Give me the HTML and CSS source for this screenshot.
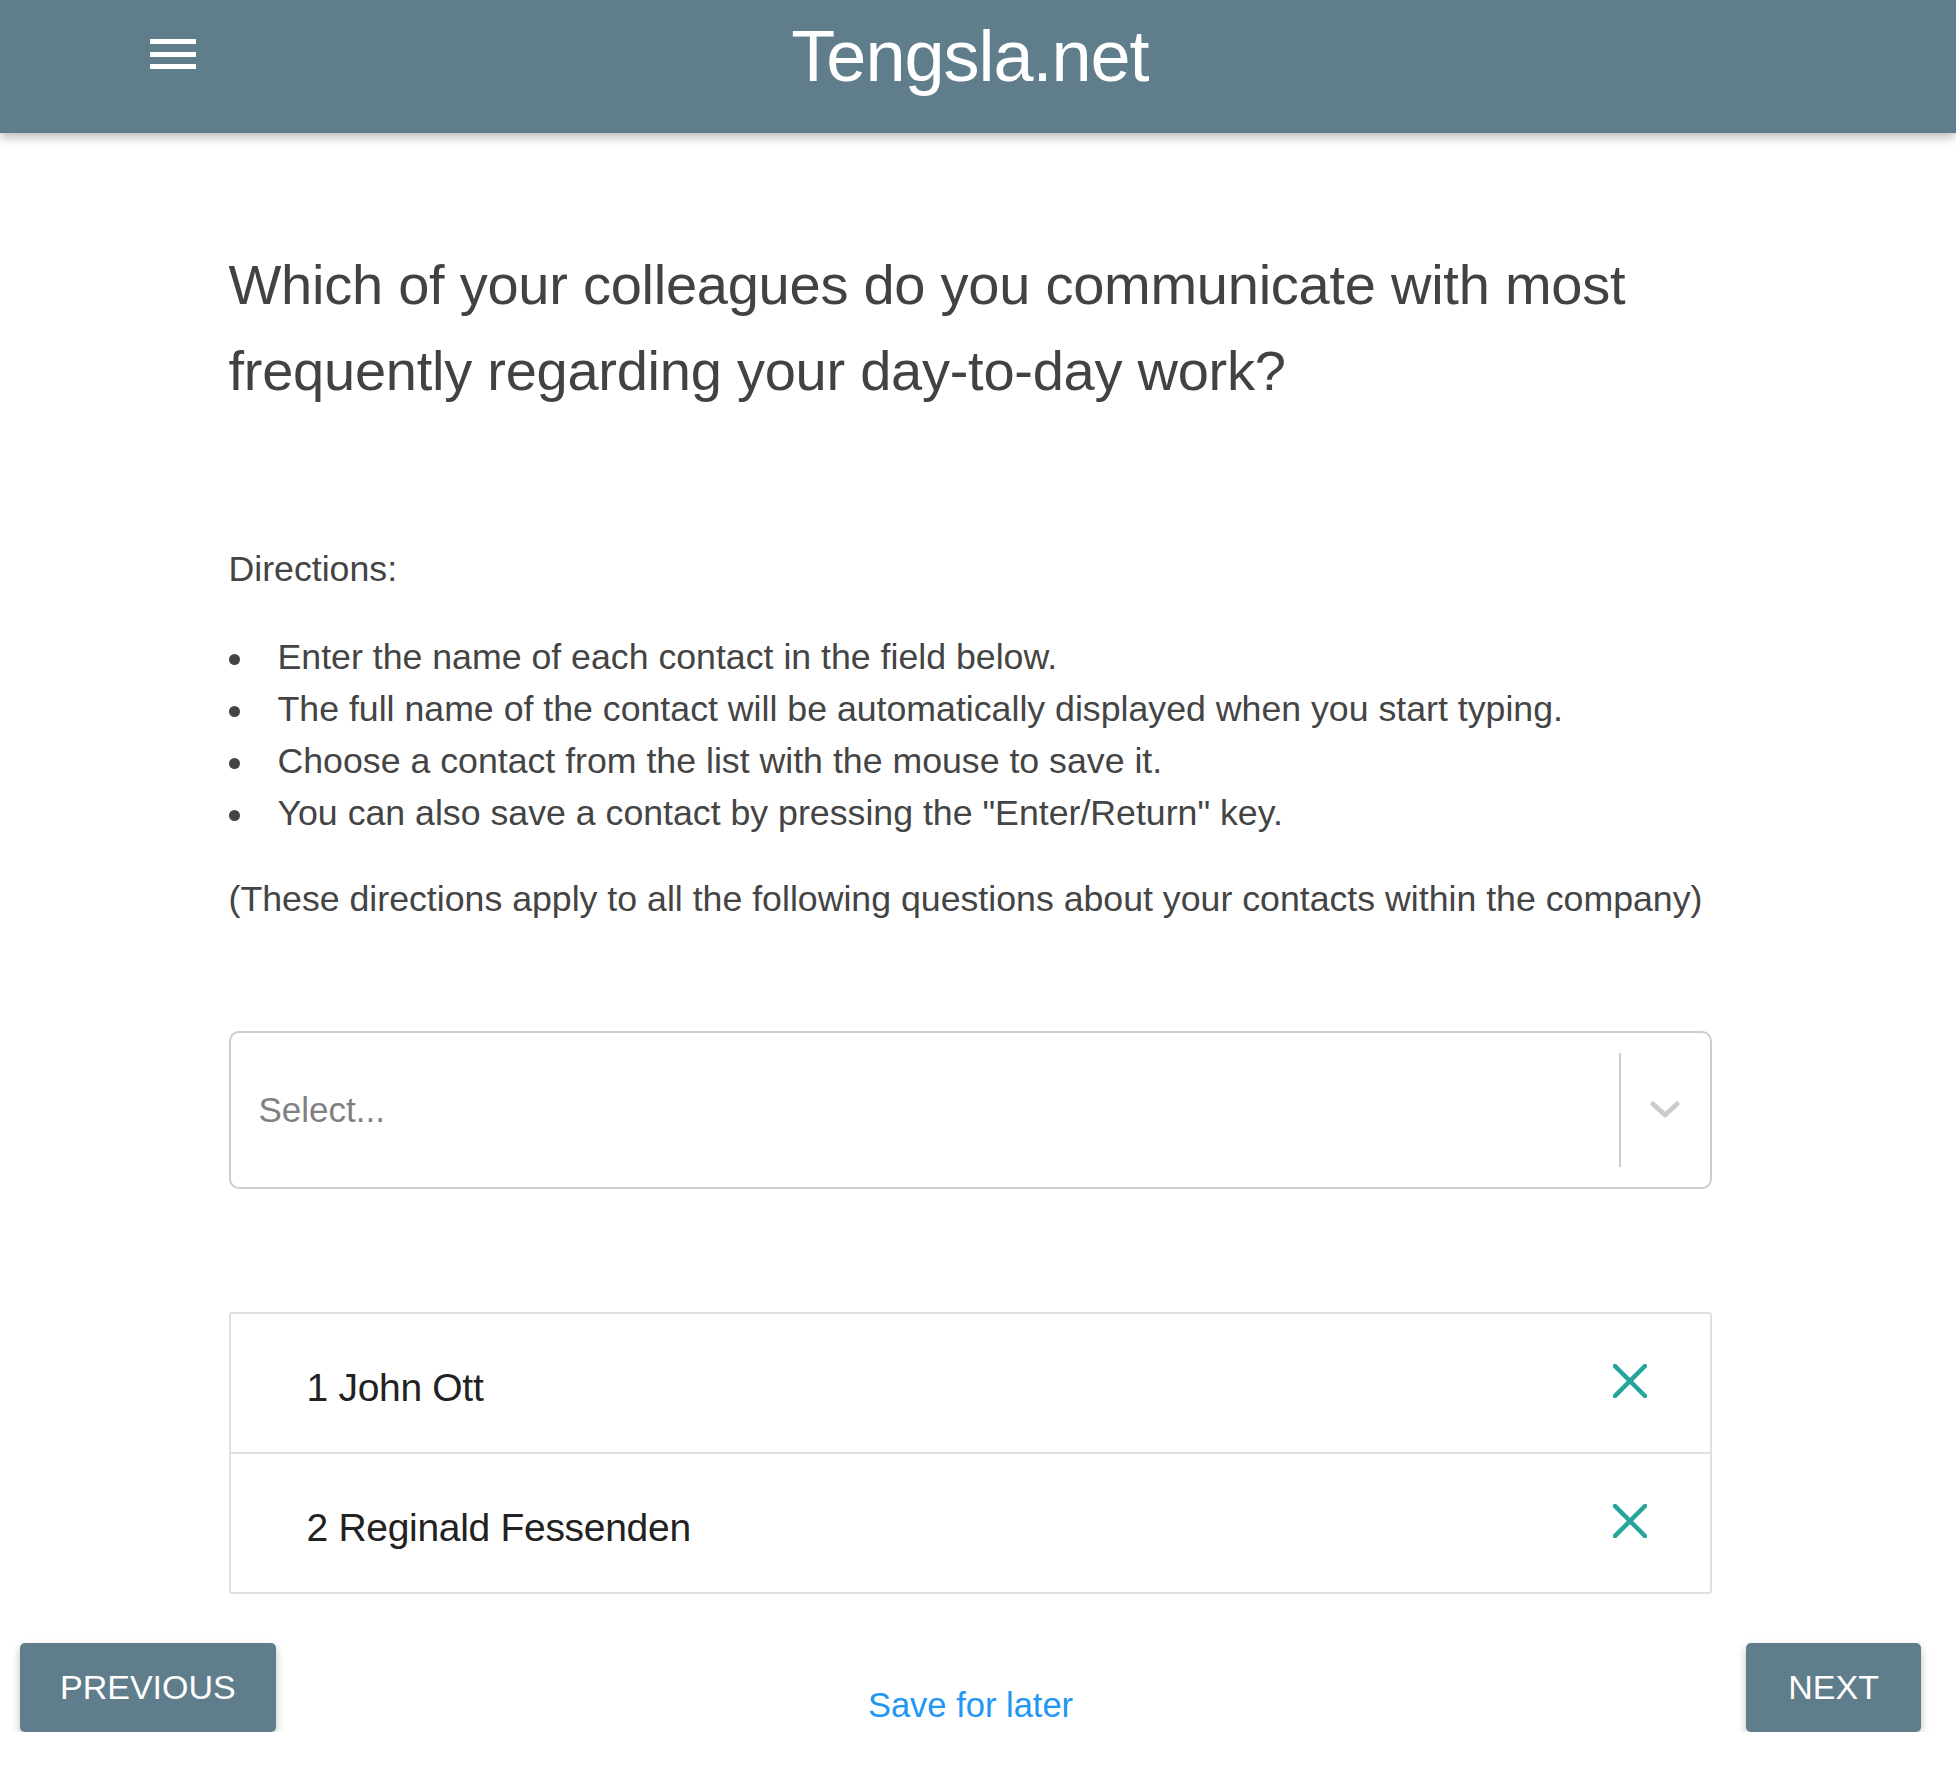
FILE: index.html
```html
<!DOCTYPE html>
<html lang="en">
<head>
<meta charset="utf-8">
<title>Tengsla.net</title>
<link rel="stylesheet" href="styles.css">
</head>
<body>
<header class="topbar">
  <div class="topbar-inner">
    <button class="menu-btn" aria-label="Menu">
      <span class="menu-line"></span>
      <span class="menu-line"></span>
      <span class="menu-line"></span>
    </button>
    <div class="brand">Tengsla.net</div>
  </div>
</header>

<div class="frame">
  <main class="content">
    <h1 class="question">Which of your colleagues do you communicate with most frequently regarding your day-to-day work?</h1>

    <section class="directions">
      <p class="dir-title">Directions:</p>
      <ul class="dir-list">
        <li>Enter the name of each contact in the field below.</li>
        <li>The full name of the contact will be automatically displayed when you start typing.</li>
        <li>Choose a contact from the list with the mouse to save it.</li>
        <li>You can also save a contact by pressing the "Enter/Return" key.</li>
      </ul>
      <p class="dir-note">(These directions apply to all the following questions about your contacts within the company)</p>
    </section>

    <div class="select">
      <div class="select-value">Select...</div>
      <div class="select-sep"></div>
      <div class="select-ind">
        <svg width="30" height="18" viewBox="0 0 30 18"><path d="M3 3 L15 14 L27 3" fill="none" stroke="#cccccc" stroke-width="5" stroke-linecap="round" stroke-linejoin="round"/></svg>
      </div>
    </div>

    <ul class="contacts">
      <li class="contact">
        <span class="contact-name">1 John Ott</span>
        <svg class="remove" width="34" height="34" viewBox="0 0 34 34"><path d="M2 2 L32 32 M32 2 L2 32" stroke="#26a69a" stroke-width="4.5" stroke-linecap="square"/></svg>
      </li>
      <li class="contact">
        <span class="contact-name">2 Reginald Fessenden</span>
        <svg class="remove" width="34" height="34" viewBox="0 0 34 34"><path d="M2 2 L32 32 M32 2 L2 32" stroke="#26a69a" stroke-width="4.5" stroke-linecap="square"/></svg>
      </li>
    </ul>
  </main>

  <footer class="footer">
    <button class="nav-btn nav-prev">PREVIOUS</button>
    <a class="save-link" href="#">Save for later</a>
    <button class="nav-btn nav-next">NEXT</button>
  </footer>
</div>
</body>
</html>
```
FILE: styles.css
```css
html, body {
  margin: 0;
  padding: 0;
  background: #ffffff;
}
body {
  font-family: "Liberation Sans", Arial, Helvetica, sans-serif;
  color: #444444;
}
.topbar {
  height: 133px;
  background: #607d8b;
  box-shadow: 0 4px 10px rgba(0, 0, 0, 0.28);
  position: relative;
  z-index: 1;
}
.topbar-inner {
  width: 1940px;
  height: 100%;
  display: flex;
  align-items: center;
  position: relative;
}
.menu-btn {
  background: none;
  border: 0;
  padding: 0;
  margin-left: 150px;
  margin-top: -25px;
  width: 46px;
  display: flex;
  flex-direction: column;
  gap: 7.5px;
  cursor: pointer;
}
.menu-line {
  display: block;
  height: 5px;
  width: 46px;
  background: #ffffff;
}
.brand {
  position: absolute;
  left: 0;
  right: 0;
  top: 11px;
  text-align: center;
  color: #ffffff;
  font-size: 72px;
  line-height: 90px;
  letter-spacing: -1px;
  pointer-events: none;
}
.frame {
  width: 1940px;
}
.content {
  width: 1483px;
  margin: 0 auto;
  padding-top: 109px;
}
.question {
  margin: 0;
  font-weight: 400;
  font-size: 56px;
  line-height: 86px;
  color: #424242;
  letter-spacing: -0.25px;
}
.directions {
  margin-top: 129px;
  font-size: 35.7px;
  line-height: 52px;
  color: #444444;
}
.dir-title {
  margin: 0;
}
.dir-list {
  list-style: none;
  margin: 36px 0 0 0;
  padding: 0;
}
.dir-list li::before {
  content: "";
  display: inline-block;
  width: 11px;
  height: 11px;
  border-radius: 50%;
  background: #444444;
  margin-right: 38px;
  vertical-align: middle;
}
.dir-note {
  margin: 34px 0 0 0;
  white-space: nowrap;
}
.select {
  margin-top: 106px;
  height: 154px;
  border: 2px solid #cccccc;
  border-radius: 10px;
  display: flex;
  align-items: center;
}
.select-value {
  flex: 1;
  padding-left: 28px;
  font-size: 35px;
  color: #808080;
}
.select-sep {
  align-self: stretch;
  width: 2px;
  margin: 20px 0;
  background: #cccccc;
}
.select-ind {
  width: 89px;
  display: flex;
  justify-content: center;
  align-items: center;
}
.contacts {
  list-style: none;
  margin: 123px 0 0 0;
  padding: 0;
  border: 2px solid #e0e0e0;
  border-radius: 3px;
}
.contact {
  height: 138px;
  display: flex;
  align-items: center;
  justify-content: space-between;
  padding: 0 63px 0 76px;
  border-bottom: 2px solid #e0e0e0;
}
.contact:last-child {
  border-bottom: 0;
}
.contact-name {
  font-size: 39px;
  letter-spacing: -0.3px;
  color: #222222;
  padding-top: 10px;
}
.remove {
  margin-top: -4px;
}
.footer {
  display: grid;
  grid-template-columns: 1fr auto 1fr;
  align-items: start;
  padding: 49px 19px 0 20px;
}
.nav-btn {
  height: 89px;
  padding: 0 40px;
  background: #607d8b;
  color: #ffffff;
  border: 0;
  border-radius: 5px;
  font-family: "Liberation Sans", Arial, Helvetica, sans-serif;
  font-size: 34px;
  box-shadow: 0 4px 8px rgba(0, 0, 0, 0.25);
  cursor: pointer;
}
.nav-prev {
  justify-self: start;
}
.nav-next {
  justify-self: end;
  padding: 0 42px;
}
.save-link {
  margin-top: 43px;
  color: #2196f3;
  font-size: 34.5px;
  text-decoration: none;
}
```
